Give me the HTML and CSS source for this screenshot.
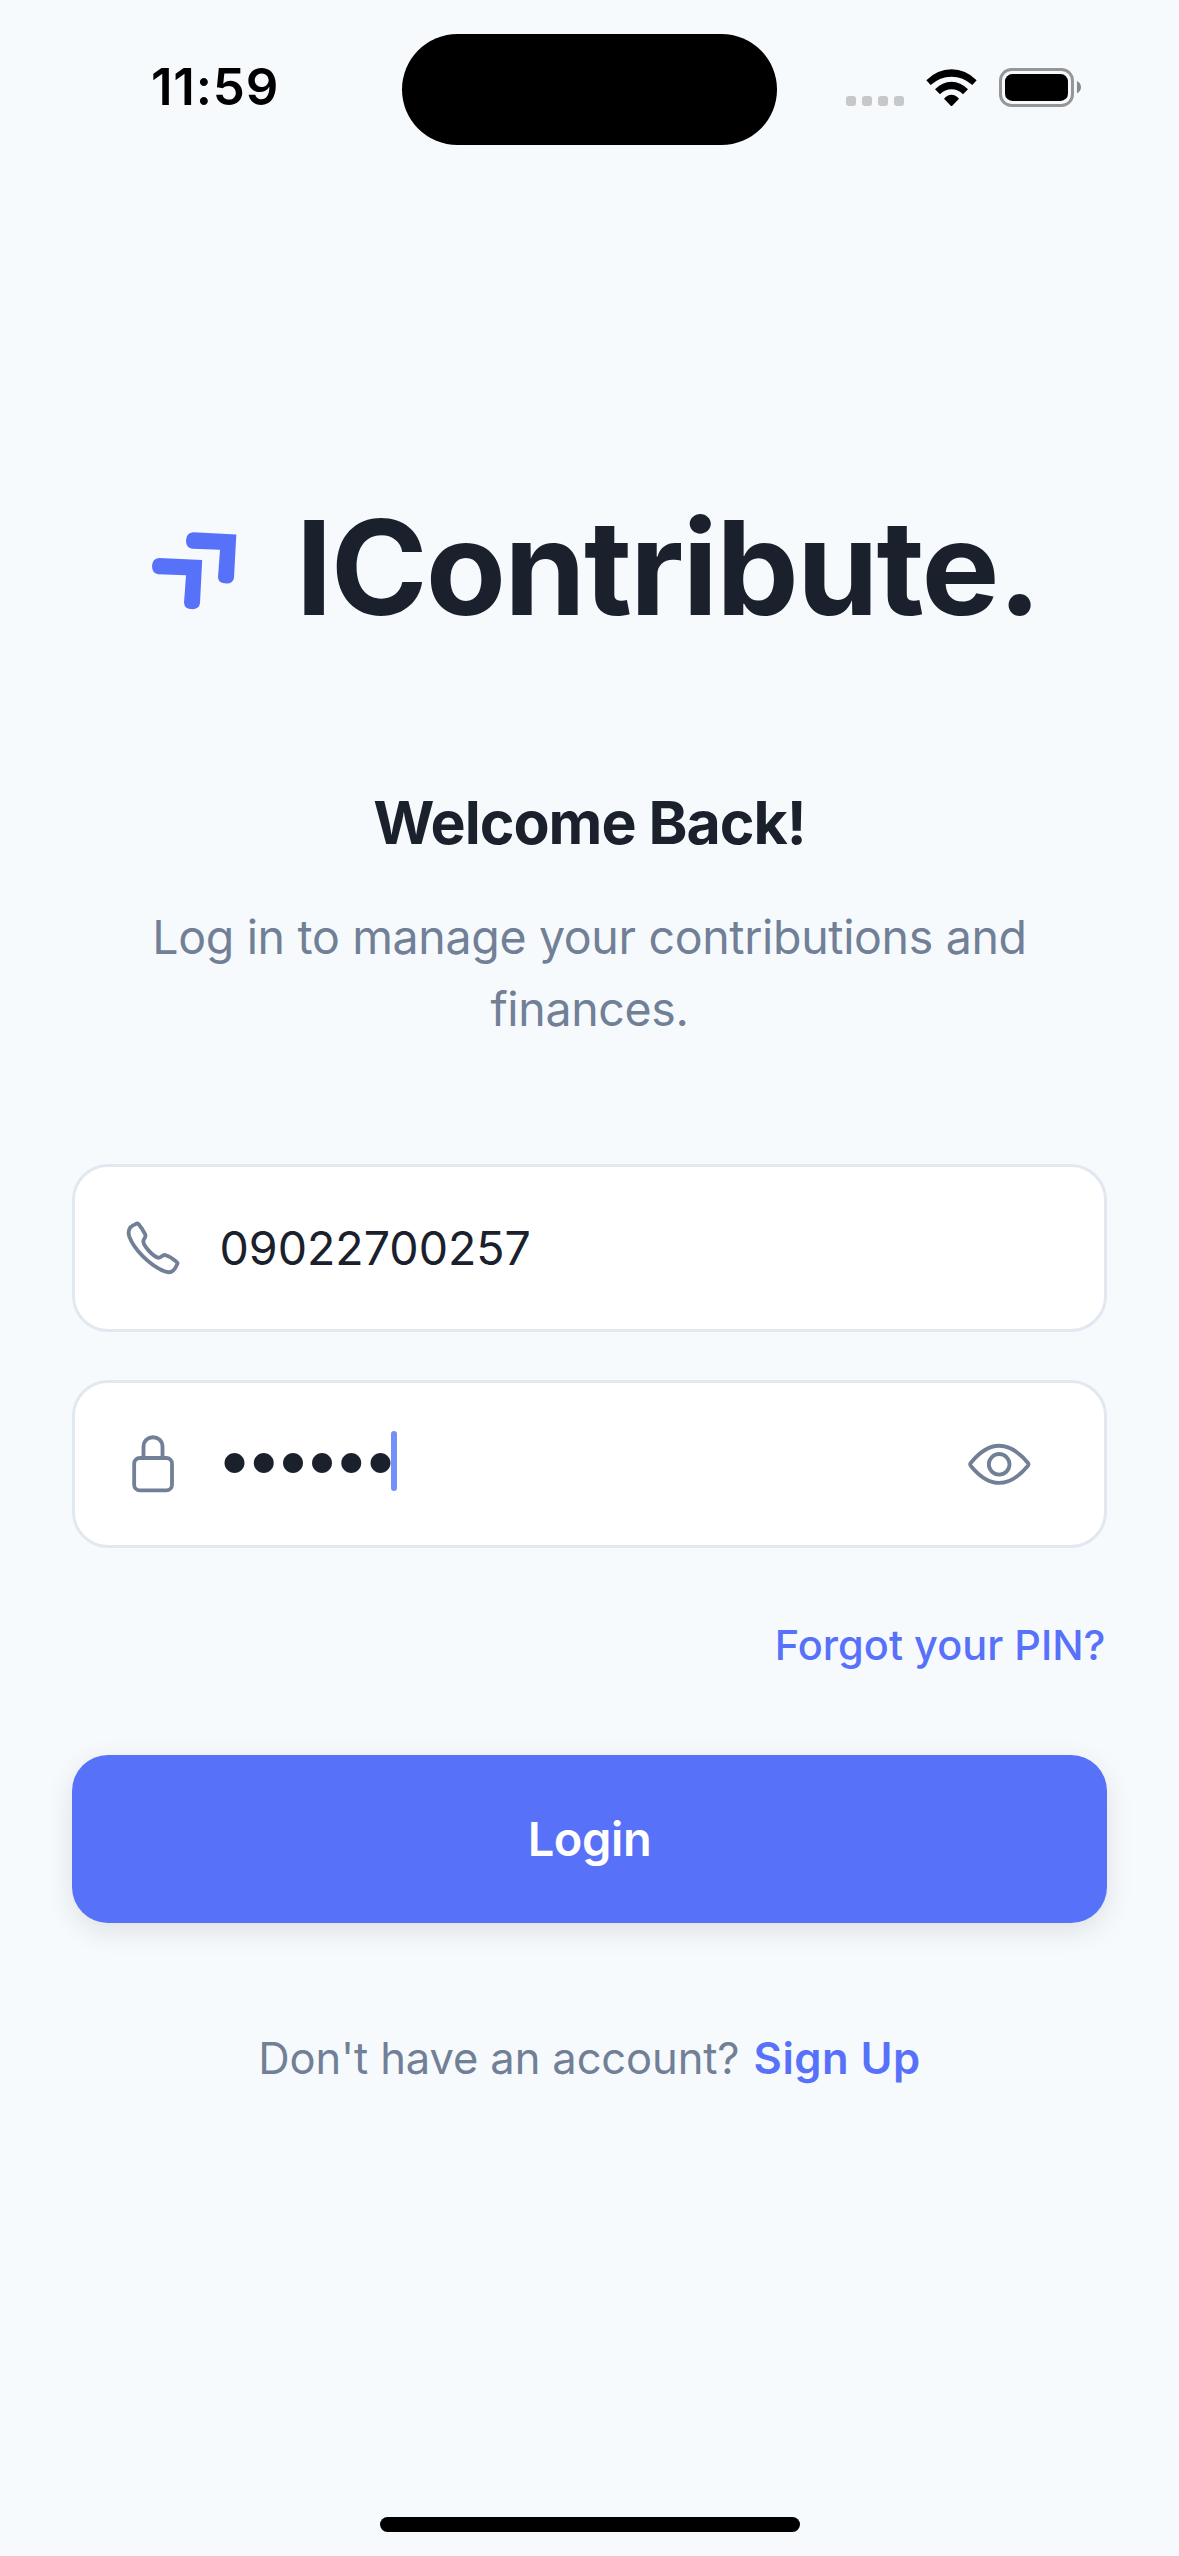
FILE: index.html
```html
<!DOCTYPE html>
<html lang="en">
<head>
<meta charset="utf-8">
<title>IContribute</title>
<link rel="stylesheet" href="styles.css">
</head>
<body>
<div class="screen">
  <header class="status">
    <span class="time">11:59</span>
    <div class="island"></div>
    <div class="indicators">
      <div class="cellular"><i></i><i></i><i></i><i></i></div>
      <svg class="wifi" viewBox="498 146 153 113">
        <path d="M499 180 Q532 147 574.500 147 Q617 147 650 180 L637 194 Q609 169 574.500 169 Q540 169 512 194 Z"/>
        <path d="M525 207 Q547 184 574.500 184 Q602 184 624 207 L609 222 Q594 207 574.500 207 Q555 207 540 222 Z"/>
        <path d="M552 235 Q562 223 574.500 223 Q587 223 597 235 L574.500 258.500 Z"/>
      </svg>
      <svg class="battery" viewBox="717 144 247 117">
        <rect class="battery-case" x="721.500" y="148.500" width="216" height="108" rx="33"/>
        <rect x="735" y="162" width="189" height="81" rx="22"/>
        <path class="battery-tip" d="M951 183 Q963 189 963 201.500 Q963 214 951 220 Z"/>
      </svg>
    </div>
  </header>

  <main class="content">
    <div class="brand">
      <svg class="logo" viewBox="66 125 254 232">
        <path d="M190 126 L319 132.500 L312 262 Q310 279.500 290 279.500 Q265 280 264 261 L270 178 L187 175.500 Q168 173 168 151 Q169 127 190 126 Z"/>
        <path d="M87 203 L216.500 209 L210 338 Q208 356.500 187 356.500 Q163 356 162 337 L168 255 L84 251.500 Q66 249 66 228 Q67 204 87 203 Z"/>
      </svg>
      <h1 class="name">IContribute.</h1>
    </div>

    <h2 class="welcome">Welcome Back!</h2>
    <p class="subtitle">Log in to manage your contributions and finances.</p>

    <form class="form">
      <div class="field">
        <svg class="field-icon" viewBox="192 207 174 174">
          <path d="M232 220.500 C234 220.500 235 222 236 223 Q247 236 256 254 C259 262 250 267 250 274 C250 289 280 319 294 323 C302 325 306 314 315 315 Q333 320 349 335 Q354 339 352 342 Q345 357 340 361 C333 368 323 368 313 364 C270 346 222 299 208 260 C204 248 205 240 211 232 Q217 226 229 221 Q231 220.500 232 220.500 Z"/>
        </svg>
        <span class="value">09022700257</span>
      </div>
      <div class="field">
        <svg class="field-icon" viewBox="192 855 174 174">
          <rect x="222.500" y="924" width="113.500" height="97" rx="17"/>
          <path d="M250.500 924 V891 C250.500 852 307.500 852 307.500 891 V924"/>
        </svg>
        <span class="value masked">••••••</span>
        <span class="caret"></span>
        <svg class="eye" viewBox="680 212 192 140">
          <path d="M691 278 C747 209 806 209 863 278 Q866 282 863 286 C806 355 747 355 691 286 Q688 282 691 278 Z"/>
          <circle cx="776.500" cy="282" r="31"/>
        </svg>
      </div>
      <a class="forgot">Forgot your PIN?</a>
      <button class="login" type="button">Login</button>
    </form>

    <p class="signup">Don't have an account? <a class="signup-link">Sign Up</a></p>
  </main>

  <div class="home-bar"></div>
</div>
</body>
</html>
```
FILE: styles.css
```css
* { box-sizing: border-box; }

body {
  margin: 0;
  background: #f7fafd;
  color: #1a202c;
  font-family: Inter, "Liberation Sans", sans-serif;
}

h1, h2, p { margin: 0; }

.screen {
  display: flex;
  flex-direction: column;
  width: 1179px;
  height: 2556px;
  overflow: hidden;
}

/* Status bar */
.status {
  display: grid;
  grid-template-columns: 402px 375px 402px;
  align-items: center;
  height: 177px;
  color: #000;
}
.time {
  padding: 0 0 3px 151px;
  font-size: 51px;
  font-weight: 600;
  line-height: 60px;
  letter-spacing: 0.8px;
}
.island {
  height: 111px;
  margin-top: 1px;
  border-radius: 56px;
  background: #000;
}
.indicators {
  display: flex;
  align-items: center;
  padding: 0 0 2px 69px;
}
.cellular {
  display: flex;
  gap: 6px;
  padding-top: 27px;
}
.cellular i {
  width: 10px;
  height: 10px;
  border-radius: 3px;
  background: #c6c8ca;
}
.wifi {
  width: 51px;
  height: 37.7px;
  margin-left: 22px;
}
.battery {
  width: 82.3px;
  height: 39px;
  margin-left: 22px;
}
.battery-case {
  fill: none;
  stroke: #949698;
  stroke-width: 9;
}
.battery-tip { fill: #88898b; }

/* Heading */
.content {
  display: flex;
  flex-direction: column;
  padding: 311px 72px 0;
}
.brand {
  display: flex;
  align-items: center;
  padding-left: 80px;
}
.logo {
  width: 84.7px;
  height: 77.3px;
  margin-top: 6px;
  fill: #5771f9;
}
.name {
  margin-left: 59px;
  font-size: 131px;
  font-weight: 700;
  line-height: 160px;
  letter-spacing: -1.84px;
  white-space: nowrap;
}
.welcome {
  margin-top: 139px;
  font-size: 59px;
  font-weight: 700;
  line-height: 72px;
  letter-spacing: -1px;
  text-align: center;
}
.subtitle {
  margin-top: 42px;
  padding: 0 60px;
  color: #718096;
  font-size: 46.5px;
  line-height: 72px;
  letter-spacing: -0.34px;
  text-align: center;
}

/* Form */
.form {
  display: flex;
  flex-direction: column;
  margin-top: 119px;
}
.field {
  display: flex;
  align-items: center;
  height: 168px;
  padding: 0 73px 0 49px;
  border: 3px solid #e2e8f0;
  border-radius: 36px;
  background: #fff;
}
.field + .field { margin-top: 48px; }
.field-icon, .eye {
  flex: none;
  fill: none;
  stroke: #718096;
  stroke-width: 11.5;
  stroke-linejoin: round;
}
.field-icon {
  width: 58px;
  height: 58px;
}
.value {
  margin-left: 37.5px;
  font-size: 46.5px;
  line-height: 60px;
}
.masked {
  padding-bottom: 11px;
  margin-left: 34.5px;
  font-size: 64px;
  letter-spacing: -6.8px;
}
.caret {
  width: 6px;
  height: 60px;
  margin: -6px 0 0 -1px;
  border-radius: 3px;
  background: #7390f8;
}
.eye {
  width: 64px;
  height: 46.7px;
  margin-left: auto;
}
.forgot {
  align-self: flex-end;
  margin-top: 72px;
  padding-right: 1.5px;
  color: #5771f9;
  font-size: 41.5px;
  font-weight: 500;
  line-height: 50px;
}
.login {
  height: 168px;
  margin-top: 85px;
  padding: 0 0 2px;
  border: 0;
  border-radius: 36px;
  background: #5771f9;
  box-shadow: 0 8px 28px rgba(0, 0, 0, 0.1);
  color: #fff;
  font: 600 47px Inter, "Liberation Sans", sans-serif;
  letter-spacing: -0.4px;
}

.signup {
  margin-top: 108px;
  color: #718096;
  font-size: 43.5px;
  line-height: 54px;
  letter-spacing: -0.12px;
  text-align: center;
}
.signup-link {
  margin-left: 2px;
  color: #5771f9;
  font-weight: 600;
  letter-spacing: 0.5px;
}

.home-bar {
  width: 420px;
  height: 15px;
  margin: auto auto 24px;
  border-radius: 8px;
  background: #000;
}
```
